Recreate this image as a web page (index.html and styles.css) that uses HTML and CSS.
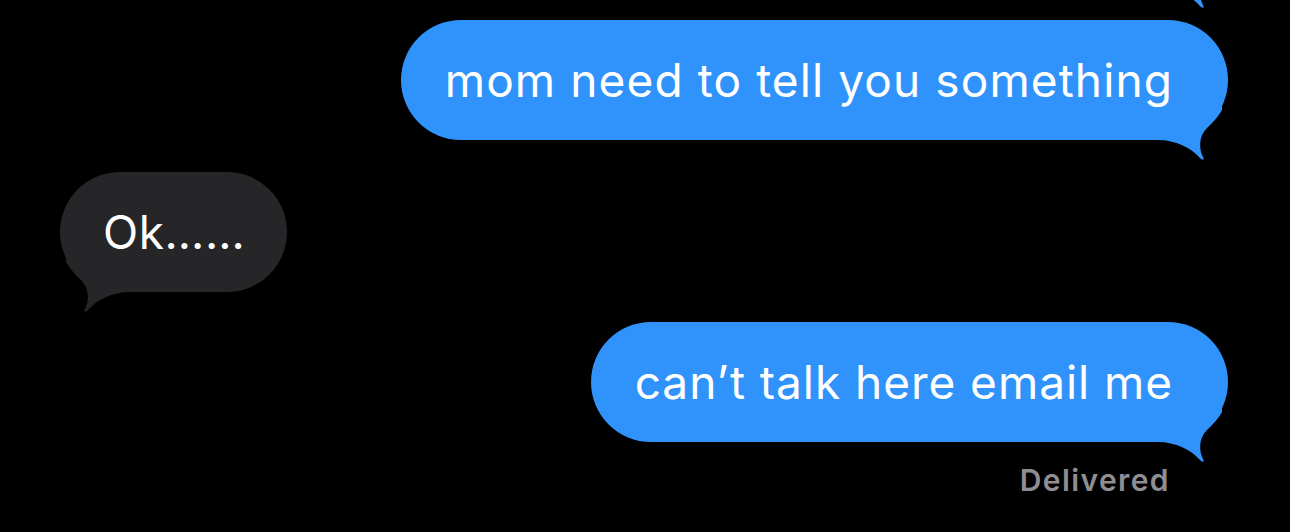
FILE: index.html
```html
<!DOCTYPE html>
<html>
<head>
<meta charset="utf-8">
<link rel="stylesheet" href="styles.css">
</head>
<body>
<div class="thread">
  <div class="row out prev">
    <div class="bubble blue">
      <svg class="tail tail-right" viewBox="0 0 68 62" width="68" height="62"><path d="M0 40 C18 40 33 48 41 57 C43 59.5 46.5 61 45.5 58 C41 50 40 37 49 28 C55 22 60 17 64 10 L64 0 L0 0 Z"/></svg>
      <span class="text hidden">earlier</span>
    </div>
  </div>
  <div class="row out">
    <div class="bubble blue">
      <svg class="tail tail-right" viewBox="0 0 68 62" width="68" height="62"><path d="M0 40 C18 40 33 48 41 57 C43 59.5 46.5 61 45.5 58 C41 50 40 37 49 28 C55 22 60 17 64 10 L64 0 L0 0 Z"/></svg>
      <span class="text">mom need to tell you something</span>
    </div>
  </div>
  <div class="row in">
    <div class="bubble gray">
      <svg class="tail tail-left" viewBox="0 0 68 62" width="68" height="62"><path d="M0 40 C18 40 33 48 41 57 C43 59.5 46.5 61 45.5 58 C41 50 40 37 49 28 C55 22 60 17 64 10 L64 0 L0 0 Z"/></svg>
      <span class="text">Ok……</span>
    </div>
  </div>
  <div class="row out last">
    <div class="bubble blue tight">
      <svg class="tail tail-right" viewBox="0 0 68 62" width="68" height="62"><path d="M0 40 C18 40 33 48 41 57 C43 59.5 46.5 61 45.5 58 C41 50 40 37 49 28 C55 22 60 17 64 10 L64 0 L0 0 Z"/></svg>
      <span class="text">can’t talk here email me</span>
    </div>
  </div>
  <div class="status">Delivered</div>
</div>
</body>
</html>
```
FILE: styles.css
```css
html, body {
  margin: 0;
  padding: 0;
  background: #000;
  height: 100%;
  overflow: hidden;
}
.thread {
  display: flex;
  flex-direction: column;
  gap: 32px;
  padding: 0 62px 0 60px;
  font-family: Inter, "Noto Sans", sans-serif;
}
.row {
  display: flex;
}
.row.out {
  justify-content: flex-end;
}
.row.in {
  justify-content: flex-start;
}
.row.prev {
  margin-top: -132px;
}
.row.last {
  margin-top: -2px;
}
.row.last + .status {
  margin-top: -12px;
}
.bubble {
  position: relative;
  height: 120px;
  box-sizing: border-box;
  display: flex;
  align-items: center;
  border-radius: 60px;
  font-size: 46px;
  color: #fff;
  white-space: nowrap;
  letter-spacing: 1.1px;
}
.text {
  position: relative;
  z-index: 1;
}
.bubble.blue {
  background: #3093fb;
  padding: 0 55px 0 44px;
}
.bubble.blue.tight {
  letter-spacing: 0.95px;
}
.bubble.gray {
  background: #262628;
  padding: 0 42px 0 43px;
  letter-spacing: 0.6px;
}
.hidden {
  visibility: hidden;
}
.tail {
  position: absolute;
  bottom: -22px;
  z-index: 0;
}
.tail-right {
  right: 2px;
  fill: #3093fb;
}
.tail-left {
  left: 2px;
  fill: #262628;
  transform: scaleX(-1);
}
.status {
  align-self: flex-end;
  margin-right: 58px;
  font-size: 30px;
  font-weight: 600;
  letter-spacing: 1.4px;
  color: #8e8e93;
  line-height: 36px;
}
```
